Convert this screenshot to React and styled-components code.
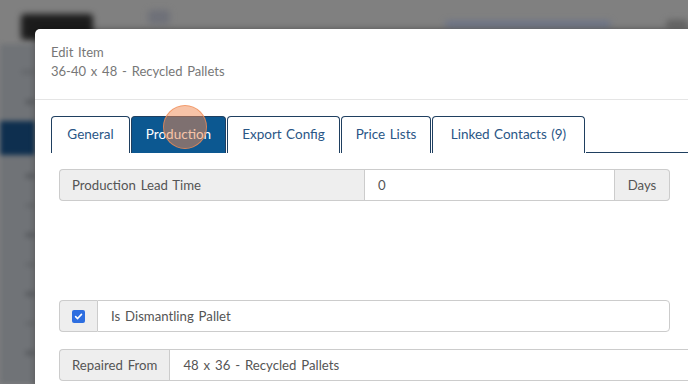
import React from 'react';
import styled, { createGlobalStyle } from 'styled-components';

const GlobalStyle = createGlobalStyle`
  html, body {
    margin: 0;
    padding: 0;
    width: 688px;
    height: 384px;
    overflow: hidden;
    background: #808080;
    font-family: Lato, "Liberation Sans", Arial, sans-serif;
  }
`;

const Page = styled.div`
  position: relative;
  width: 688px;
  height: 384px;
  overflow: hidden;
`;

/* dimmed, blurred app behind the modal */
const Backdrop = styled.div`
  position: absolute;
  inset: 0;
  display: grid;
  grid-template-rows: 44px 1fr;
  grid-template-columns: 35px 1fr;
  background: #808080;
`;

const TopBar = styled.div`
  grid-column: 1 / 3;
  display: flex;
  align-items: center;
  gap: 55px;
  padding: 0 0 0 21px;
  filter: blur(3px);
`;

const Smudge = styled.div`
  width: ${(p) => p.w}px;
  height: ${(p) => p.h}px;
  background: ${(p) => p.c};
  border-radius: 4px;
  margin-left: ${(p) => p.ml || 0}px;
  margin-top: ${(p) => p.mt || 0}px;
`;

const SideBar = styled.div`
  display: flex;
  flex-direction: column;
  align-items: flex-end;
  gap: 24px;
  padding-top: 25px;
  background: #707377;
  filter: blur(2.5px);
`;

const SideActive = styled.div`
  align-self: stretch;
  height: 34px;
  background: #0e2f4f;
  margin: -8px 0 -6px;
`;

const Modal = styled.div`
  position: relative;
  margin: 29px 0 0 35px;
  width: 680px;
  height: 400px;
  background: #fff;
  border-radius: 5px 0 0 0;
  box-shadow: 0 0 6px rgba(0, 0, 0, 0.35);
`;

const Header = styled.div`
  padding: 14px 16px 18px;
  border-bottom: 1px solid #e5e5e5;
  color: #777;
  font-size: 13px;
  line-height: 19px;
  font-variant-numeric: tabular-nums;
  word-spacing: 1.5px;
`;

const Body = styled.div`
  padding: 16px 0 0 16px;
`;

const TabList = styled.div`
  display: flex;
  align-items: flex-end;
  gap: 1px;
  height: 37px;
`;

const Tab = styled.div`
  position: relative;
  flex: 0 0 ${(p) => p.w}px;
  height: 37px;
  box-sizing: border-box;
  display: flex;
  align-items: center;
  justify-content: center;
  padding-bottom: 3px;
  border: 1px solid #1f3f60;
  border-bottom: none;
  border-radius: 4px 4px 0 0;
  font-size: 13.5px;
  word-spacing: 1px;
  white-space: nowrap;
  color: ${(p) => (p.active ? '#fff' : '#2a5686')};
  background: ${(p) => (p.active ? '#0c5891' : '#fff')};
`;

const TabFill = styled.div`
  flex: 1;
  height: 1px;
  background: #1f3f60;
`;

const Pointer = styled.div`
  position: absolute;
  left: 31px;
  top: -12px;
  width: 42px;
  height: 42px;
  border-radius: 50%;
  background: rgba(240, 135, 80, 0.5);
  border: 1.5px solid rgba(240, 140, 85, 0.75);
`;

const Content = styled.div`
  display: flex;
  flex-direction: column;
  padding: 16px 0 0 8px;
`;

const Group = styled.div`
  display: flex;
  width: ${(p) => p.w}px;
  height: 32px;
  margin-top: ${(p) => p.mt || 0}px;
  font-size: 13.2px;
  color: #555;
  word-spacing: 1.5px;
  white-space: nowrap;
  font-variant-numeric: tabular-nums;
`;

const Addon = styled.div`
  flex: 0 0 ${(p) => p.w}px;
  display: flex;
  align-items: center;
  justify-content: ${(p) => (p.center ? 'center' : 'flex-start')};
  box-sizing: border-box;
  padding: 0 12px;
  background: #eee;
  border: 1px solid #ccc;
  border-radius: ${(p) => (p.right ? '0 4px 4px 0' : '4px 0 0 4px')};
  ${(p) => (p.right ? 'border-left: none;' : 'border-right: none;')}
`;

const Field = styled.div`
  flex: ${(p) => (p.w ? `0 0 ${p.w}px` : 1)};
  display: flex;
  align-items: center;
  box-sizing: border-box;
  padding: 0 13px;
  border: 1px solid #ccc;
  border-radius: ${(p) => (p.last ? '0 4px 4px 0' : '0')};
  ${(p) => (p.open ? 'border-right: none;' : '')}
`;

const Check = styled.div`
  width: 13px;
  height: 13px;
  border-radius: 2px;
  background: #2d6ee0;
  display: flex;
  align-items: center;
  justify-content: center;
`;

export default function App() {
  return (
    <>
      <GlobalStyle />
      <Page>
        <Backdrop>
          <TopBar>
            <Smudge w={74} h={26} c="#1c1c1c" mt={10} />
            <Smudge w={22} h={14} c="#6e7078" mt={-10} />
            <Smudge w={170} h={6} c="#6a7288" ml={220} mt={4} />
            <Smudge w={22} h={8} c="#606060" mt={4} />
          </TopBar>
          <SideBar>
            <Smudge w={14} h={6} c="#676a6e" />
            <Smudge w={10} h={6} c="#5d6064" />
            <SideActive />
            <Smudge w={10} h={6} c="#5d6064" />
            <Smudge w={10} h={5} c="#66696d" />
            <Smudge w={10} h={6} c="#5d6064" />
            <Smudge w={10} h={5} c="#66696d" />
            <Smudge w={10} h={6} c="#5d6064" />
            <Smudge w={10} h={5} c="#66696d" />
            <Smudge w={10} h={6} c="#5d6064" />
          </SideBar>
        </Backdrop>
        <Modal>
          <Header>
            <div>Edit Item</div>
            <div>36-40 x 48 - Recycled Pallets</div>
          </Header>
          <Body>
            <TabList>
              <Tab w={79}>General</Tab>
              <Tab w={95} active>
                Production
                <Pointer />
              </Tab>
              <Tab w={113}>Export Config</Tab>
              <Tab w={90}>Price Lists</Tab>
              <Tab w={153}>Linked Contacts (9)</Tab>
              <TabFill />
            </TabList>
            <Content>
              <Group w={611}>
                <Addon w={305}>Production Lead Time</Addon>
                <Field w={251}>0</Field>
                <Addon w={55} right center>Days</Addon>
              </Group>
              <Group w={611} mt={99}>
                <Addon w={38} center>
                  <Check>
                    <svg width="9" height="9" viewBox="0 0 10 10">
                      <path d="M1.8 5.2 L4 7.3 L8.3 2.6" fill="none" stroke="#fff" strokeWidth="1.8" strokeLinecap="round" strokeLinejoin="round" />
                    </svg>
                  </Check>
                </Addon>
                <Field last>Is Dismantling Pallet</Field>
              </Group>
              <Group w={640} mt={17}>
                <Addon w={110}>Repaired From</Addon>
                <Field open>48 x 36 - Recycled Pallets</Field>
              </Group>
            </Content>
          </Body>
        </Modal>
      </Page>
    </>
  );
}
